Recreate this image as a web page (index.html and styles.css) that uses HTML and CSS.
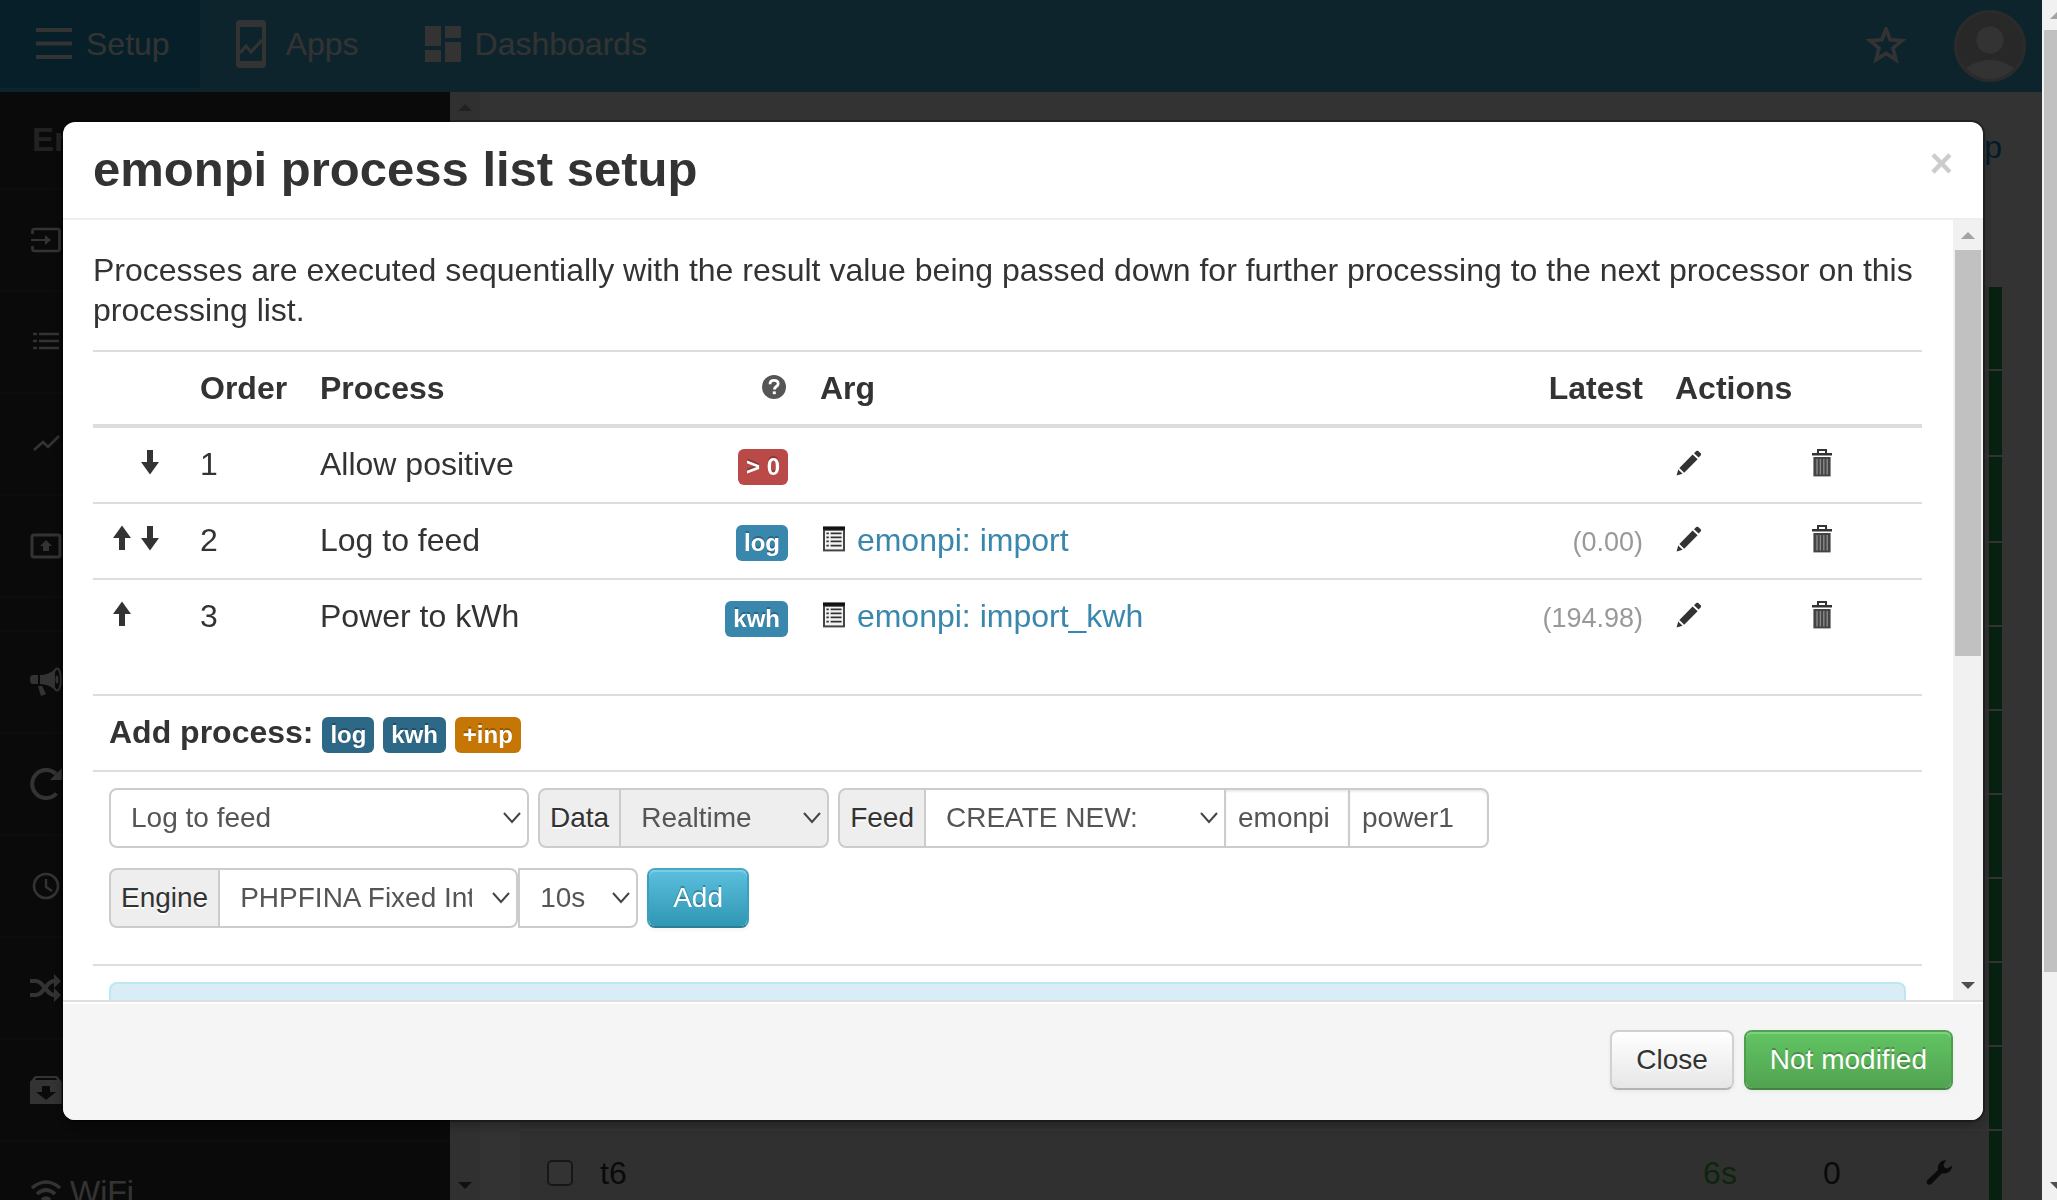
FILE: index.html
```html
<!DOCTYPE html>
<html lang="en">
<head>
<meta charset="utf-8">
<title>emonpi process list setup</title>
<link rel="stylesheet" href="styles.css">
</head>
<body>
<svg class="defs" aria-hidden="true">
  <symbol id="i-up" viewBox="0 0 14 14"><path d="M6.500.8 11 7H8v6H5V7H2z"/></symbol>
  <symbol id="i-down" viewBox="0 0 14 14"><path d="M6.500 13.200 2 7h3V1h3v6h3z"/></symbol>
  <symbol id="i-pencil" viewBox="0 0 14 14"><path d="M.8 13.200l.8-3 2.200 2.200zM2.200 9.500 8.800 2.800l2.500 2.300-6.700 6.800zM9.500 2.100l1-1c.5-.4 1-.3 1.300 0l1 1c.4.4.3.8 0 1.200l-1 1z"/></symbol>
  <symbol id="i-trash" viewBox="0 0 14 14"><path d="M4.500 0h5v2H12v1.300H2V2h2.500zm1 1v1h3V1z" fill-rule="evenodd"/><path d="M2.700 4h8.600v9.700H2.700z" fill="#444"/><path d="M4.500 5v7.700M6.200 5v7.700M7.900 5v7.700M9.600 5v7.700" stroke="#8a8a8a" stroke-width=".7"/></symbol>
  <symbol id="i-list" viewBox="0 0 14 14"><path d="M1.500.8h11V13.200h-11z" fill="#444"/><path d="M1.500.8h11v1.600h-11z" fill="#111"/><path d="M2.500 2.900h9v9.300h-9z" fill="#f4f4f4"/><path d="M3.200 4.200h1.200M5.300 4.200h5.500M3.200 6.200h1.200M5.300 6.200h5.500M3.200 8.200h1.200M5.300 8.200h5.500M3.200 10.300h1.200M5.300 10.300h5.500" stroke="#333" stroke-width=".9"/></symbol>
  <symbol id="i-help" viewBox="0 0 14 14"><circle cx="7" cy="7" r="6" fill="#555"/><path d="M5 5.600C5 4.300 5.800 3.700 7 3.700s2.100.6 2.100 1.700C9.100 6.800 7.200 6.700 7.200 8.200" fill="none" stroke="#fff" stroke-width="1.400"/><path d="M6.400 9.200h1.500v1.400H6.400z" fill="#fff"/></symbol>
  <symbol id="i-wrench" viewBox="0 0 14 14"><path d="M1 11.200 6.500 6C6 3.600 7.500 1 10.600 1.100L9.200 3.200l.5 1.600 1.700.4L13.500 3.700C13.600 6.700 11 8.100 8.500 7.600L3.200 13c-1.200 1-3-.5-2.200-1.800z"/></symbol>
</svg>

<div class="viewport">
  <div class="page">
    <header class="topbar">
      <nav class="topnav">
        <a class="topnav-item active" href="#"><svg viewBox="0 0 36 48"><path d="M0 10h36M0 23.500h36M0 37h36" stroke="currentColor" stroke-width="4"/></svg>Setup</a>
        <a class="topnav-item" href="#"><svg viewBox="0 0 36 48"><path d="M4 0h22a4 4 0 0 1 4 4v40a4 4 0 0 1-4 4H4a4 4 0 0 1-4-4V4a4 4 0 0 1 4-4zM4 7v34h22V7z" fill="currentColor" fill-rule="evenodd"/><path d="M4 33l6-7 5 6 11-12" fill="none" stroke="currentColor" stroke-width="3"/></svg>Apps</a>
        <a class="topnav-item" href="#"><svg viewBox="0 0 36 48"><path d="M0 6h16v20H0zM20 6h16v12H20zM0 30h16v12H0zM20 22h16v20H20z" fill="currentColor"/></svg>Dashboards</a>
      </nav>
      <div class="topbar-right">
        <svg class="star" viewBox="0 2 40 38"><path d="M20 4l4.200 10.800 11.800.8-9 7.600 2.900 11.600L20 28.500l-9.900 6.300L13 23.200l-9-7.600 11.800-.8z" fill="none" stroke="currentColor" stroke-width="3.600"/></svg>
        <svg class="avatar" viewBox="0 0 72 72"><circle cx="36" cy="36" r="34.500" fill="#c8c8c8" stroke="#d4d4d4" stroke-width="3"/><circle cx="36" cy="30" r="13.500" fill="#fff"/><path d="M12 58q24-16 48 0-10 11-24 11T12 58z" fill="#fff"/></svg>
      </div>
    </header>
    <div class="columns">
      <aside class="sidebar">
        <h4 class="sidebar-title">Emoncms</h4>
        <a href="#" aria-label="Inputs"><svg viewBox="0 0 32 32"><path d="M2.500 10V7a2 2 0 0 1 2-2h23a2 2 0 0 1 2 2v18a2 2 0 0 1-2 2h-23a2 2 0 0 1-2-2v-3" fill="none" stroke="currentColor" stroke-width="2.600"/><path d="M1 15h14v-4l6 5-6 5v-4H1z" fill="currentColor"/></svg></a>
        <a href="#" aria-label="Feeds"><svg viewBox="0 0 32 32"><path d="M3 8h4M3 15h4M3 22h4M9 8h20M9 15h20M9 22h20" stroke="currentColor" stroke-width="2.600"/></svg></a>
        <a href="#" aria-label="Graph"><svg viewBox="0 0 32 32"><path d="M4 22l9-8 5 5L29 8" fill="none" stroke="currentColor" stroke-width="2.600"/></svg></a>
        <a href="#" aria-label="Publish"><svg viewBox="0 0 32 32"><rect x="2" y="5" width="28" height="22" rx="2" fill="none" stroke="currentColor" stroke-width="3"/><path d="M16 10l6 6h-3v5h-6v-5h-3z" fill="currentColor"/></svg></a>
        <div class="sidebar-gap"></div>
        <a href="#" aria-label="Events"><svg viewBox="0 3 32 32"><path d="M3 12h5v9H3q-3 0-3-4.500T3 12zM10 12q9 0 15-6v21q-6-6-15-6zM8 23h4l4 8-5 2z" fill="currentColor"/><ellipse cx="27" cy="16.500" rx="4" ry="11" fill="none" stroke="currentColor" stroke-width="2"/><ellipse cx="27" cy="16.500" rx="1.500" ry="4" fill="currentColor"/></svg></a>
        <a href="#" aria-label="Update"><svg viewBox="0 0 32 32"><path d="M26.500 25.500A14 14 0 1 1 26 6" fill="none" stroke="currentColor" stroke-width="4"/><path d="M32 0v12H20z" fill="currentColor"/></svg></a>
        <a href="#" aria-label="Schedule"><svg viewBox="0 0 32 32"><circle cx="16" cy="16" r="12" fill="none" stroke="currentColor" stroke-width="2.600"/><path d="M16 9v8l6 4" fill="none" stroke="currentColor" stroke-width="2.400"/></svg></a>
        <a href="#" aria-label="Sync"><svg viewBox="0 0 32 32"><path d="M0 9h6c8 0 10 14 18 14h2M0 23h6c8 0 10-14 18-14h2" fill="none" stroke="currentColor" stroke-width="4"/><path d="M24 2l7 7-7 7zM24 16l7 7-7 7z" fill="currentColor"/></svg></a>
        <a href="#" aria-label="Backup"><svg viewBox="0 0 32 32"><path d="M5 2h22l5 6v22H0V8zM6.500 4 5 6h22l-1.500-2zM12 12v6H6l10 8 10-8h-6v-6z" fill="currentColor" fill-rule="evenodd"/></svg></a>
        <a href="#"><svg viewBox="0 0 32 32"><path d="M2 12q14-12 28 0M7 18q9-8 18 0M12 24q4-4 8 0" fill="none" stroke="currentColor" stroke-width="3.600"/></svg>WiFi</a>
      </aside>
      <div class="scrollbar">
        <div class="arrow arrow-up muted"></div><div class="thumb thumb-side"></div><div class="arrow arrow-down"></div>
      </div>
      <main class="content">
        <a class="help-link" href="#">Help</a>
        <table class="inputs">
          <colgroup><col class="in-check"><col><col class="in-time"><col class="in-value"><col class="in-tool"><col class="in-bar"></colgroup>
          <tbody>
            <tr><td colspan="5"></td><td class="fresh"></td></tr>
            <tr class="tall"><td colspan="5"></td><td class="fresh"></td></tr>
            <tr class="tall"><td colspan="5"></td><td class="fresh"></td></tr>
            <tr><td colspan="5"></td><td class="fresh"></td></tr>
            <tr><td colspan="5"></td><td class="fresh"></td></tr>
            <tr><td colspan="5"></td><td class="fresh"></td></tr>
            <tr><td colspan="5"></td><td class="fresh"></td></tr>
            <tr><td colspan="5"></td><td class="fresh"></td></tr>
            <tr><td colspan="5"></td><td class="fresh"></td></tr>
            <tr><td colspan="5"></td><td class="fresh"></td></tr>
            <tr><td class="check"><input type="checkbox" aria-label="t6"></td><td>t6</td><td class="time">6s</td><td class="value">0</td><td class="tool"><svg class="icon"><use href="#i-wrench"/></svg></td><td class="fresh"></td></tr>
          </tbody>
        </table>
      </main>
    </div>
  </div>
  <div class="scrollbar scrollbar-page">
    <div class="arrow arrow-up muted"></div><div class="thumb thumb-page"></div><div class="arrow arrow-down"></div>
  </div>
</div>

<div class="backdrop"></div>

<section class="modal" role="dialog" aria-labelledby="modal-title">
  <header class="modal-header">
    <h3 id="modal-title">emonpi process list setup</h3>
    <button class="close" type="button">×</button>
  </header>
  <div class="modal-middle">
    <div class="modal-body">
      <p>Processes are executed sequentially with the result value being passed down for further processing to the next processor on this processing list.</p>
      <table class="processes">
        <colgroup><col class="c-move"><col class="c-order"><col class="c-process"><col class="c-label"><col><col class="c-latest"><col class="c-edit"><col class="c-delete"></colgroup>
        <thead>
          <tr><th></th><th>Order</th><th>Process</th><th class="right"><svg class="icon"><use href="#i-help"/></svg></th><th>Arg</th><th class="right">Latest</th><th colspan="2">Actions</th></tr>
        </thead>
        <tbody>
          <tr>
            <td><span class="moves"><i></i><svg class="icon"><use href="#i-down"/></svg></span></td><td>1</td><td>Allow positive</td><td class="right"><span class="label red">&gt; 0</span></td><td></td><td></td>
            <td><svg class="icon"><use href="#i-pencil"/></svg></td><td><svg class="icon"><use href="#i-trash"/></svg></td>
          </tr>
          <tr>
            <td><span class="moves"><svg class="icon"><use href="#i-up"/></svg><svg class="icon"><use href="#i-down"/></svg></span></td><td>2</td><td>Log to feed</td><td class="right"><span class="label blue">log</span></td><td><a class="feed" href="#"><svg class="icon"><use href="#i-list"/></svg> emonpi: import</a></td><td class="right"><small>(0.00)</small></td>
            <td><svg class="icon"><use href="#i-pencil"/></svg></td><td><svg class="icon"><use href="#i-trash"/></svg></td>
          </tr>
          <tr>
            <td><span class="moves"><svg class="icon"><use href="#i-up"/></svg></span></td><td>3</td><td>Power to kWh</td><td class="right"><span class="label blue">kwh</span></td><td><a class="feed" href="#"><svg class="icon"><use href="#i-list"/></svg> emonpi: import_kwh</a></td><td class="right"><small>(194.98)</small></td>
            <td><svg class="icon"><use href="#i-pencil"/></svg></td><td><svg class="icon"><use href="#i-trash"/></svg></td>
          </tr>
        </tbody>
      </table>
      <div class="row add-title"><b>Add process:</b> <span class="label navy">log</span> <span class="label navy">kwh</span> <span class="label orange">+inp</span></div>
      <form class="row controls">
        <div class="line">
          <select class="w-process" aria-label="Process"><option>Log to feed</option></select>
          <div class="group"><label class="addon" for="data">Data</label><select id="data" class="w-data" disabled><option>Realtime</option></select></div>
          <div class="group"><label class="addon" for="feed">Feed</label><select id="feed" class="w-feed"><option>CREATE NEW:</option></select><input class="w-tag" type="text" value="emonpi" aria-label="Tag"><input class="w-name" type="text" value="power1" aria-label="Name"></div>
        </div>
        <div class="line">
          <div class="group engine"><label class="addon" for="engine">Engine</label><select id="engine" class="w-engine"><option>PHPFINA Fixed Interval TimeSeries</option></select><select class="w-interval" aria-label="Interval"><option>10s</option></select></div>
          <button class="btn info" type="button">Add</button>
        </div>
      </form>
      <div class="row"><div class="alert"></div></div>
    </div>
    <div class="scrollbar">
      <div class="arrow arrow-up muted"></div><div class="thumb thumb-modal"></div><div class="arrow arrow-down"></div>
    </div>
  </div>
  <footer class="modal-footer">
    <button class="btn" type="button">Close</button>
    <button class="btn success" type="button">Not modified</button>
  </footer>
</section>
</body>
</html>
```
FILE: styles.css
```css
* { box-sizing: border-box; }
body {
  margin: 0;
  height: 100vh;
  overflow: hidden;
  background: #fff;
  color: #333;
  font: 32px/40px "Liberation Sans", Arial, sans-serif;
}
a { color: #08c; text-decoration: none; }
svg { display: block; }
.defs { position: absolute; width: 0; height: 0; }
.icon { display: inline-block; width: 28px; height: 28px; fill: #333; vertical-align: -2px; }

/* page behind the dialog */
.viewport { display: flex; height: 100vh; overflow: hidden; }
.page { flex: 1; min-width: 0; display: flex; flex-direction: column; }
.topbar { display: flex; justify-content: space-between; flex: none; height: 92px; background: #48b4dc; }
.topnav { display: flex; height: 88px; }
.topnav-item { display: flex; align-items: center; gap: 14px; padding: 0 30px 0 36px; color: #fff; }
.topnav-item svg { width: 36px; height: 48px; }
.topnav-item.active { background: #1e9bcd; }
.topbar-right { display: flex; align-items: center; gap: 48px; padding-right: 16px; color: #fff; }
.star { width: 40px; height: 38px; }
.avatar { width: 72px; height: 72px; }
.columns { display: flex; flex: 1; min-height: 0; }
.sidebar { flex: none; width: 450px; background: #333; overflow: hidden; }
.sidebar-title { margin: 0; padding: 28px 32px; height: 96px; font-size: 33px; color: #aaa; }
.sidebar a { display: flex; align-items: center; gap: 8px; height: 102px; padding: 0 30px; border-top: 2px solid #414141; color: #fff; }
.sidebar a svg { width: 32px; height: 32px; overflow: visible; }
.sidebar-gap { height: 34px; border-top: 2px solid #414141; }
.content { flex: 1; min-width: 0; padding: 35px 40px 0; overflow: hidden; }
.help-link { display: block; text-align: right; margin-bottom: 120px; }
.inputs { width: 100%; table-layout: fixed; border-collapse: separate; border-spacing: 0; background: #f0f0f0; }
.inputs td { height: 84px; padding: 2px 0 0; border-bottom: 2px solid #fff; }
.inputs .tall td { height: 86px; }
.inputs .fresh { background: #28a04b; }
.inputs .check { padding-left: 27px; }
.inputs input { display: block; appearance: none; width: 26px; height: 26px; margin: 0; border: 2px solid #767676; border-radius: 5px; background: #fff; }
.inputs .time { text-align: center; color: #4b4; }
.inputs .value, .inputs .tool { text-align: center; }
.in-check { width: 80px; }
.in-time { width: 110px; }
.in-value { width: 114px; }
.in-tool { width: 100px; }
.in-bar { width: 13px; }
.backdrop { position: fixed; inset: 0 15px 0 0; background: rgba(0, 0, 0, .8); }

/* scrollbars */
.scrollbar { display: flex; flex-direction: column; flex: none; width: 30px; background: #f1f1f1; }
.arrow { flex: none; height: 30px; display: flex; align-items: center; justify-content: center; }
.arrow::before { content: ""; border: 7px solid transparent; border-top-width: 0; border-bottom: 7px solid #505050; }
.arrow-down::before { border-width: 7px 7px 0; border-top-color: #505050; border-bottom: 0; }
.arrow.muted::before { border-bottom-color: #a3a3a3; }
.thumb { margin: 0 2px; background: #c1c1c1; }
.arrow-down { margin-top: auto; }
.thumb-side { height: 80%; }
.thumb-page { height: 942px; max-height: 90%; }
.thumb-modal { height: 406px; max-height: 80%; }
.scrollbar-page { width: 15px; overflow: hidden; }
.scrollbar-page > div { width: 30px; }

/* dialog */
.modal {
  position: fixed;
  inset: 122px 74px 80px 63px;
  display: flex;
  flex-direction: column;
  border-radius: 12px;
  overflow: hidden;
  background: #fff;
  box-shadow: 0 0 0 2px rgba(0, 0, 0, .3), 0 6px 14px rgba(0, 0, 0, .3);
}
.modal-header { display: flex; justify-content: space-between; align-items: flex-start; flex: none; padding: 17px 30px 19px; border-bottom: 2px solid #eee; }
.modal-header h3 { margin: 0; font-size: 49px; line-height: 60px; }
.close { padding: 0; border: 0; background: none; color: #ccc; font: bold 40px/48px "Liberation Sans", Arial, sans-serif; }
.modal-middle { display: flex; flex: 1; min-height: 0; }
.modal-body { flex: 1; min-width: 0; padding: 30px 31px 0 30px; overflow: hidden; }
.modal-body p { margin: 0 0 20px; }
.processes { width: 100%; table-layout: fixed; border-collapse: separate; border-spacing: 0; margin-bottom: 40px; }
.processes th, .processes td { height: 76px; padding: 16px; border-top: 2px solid #ddd; text-align: left; vertical-align: top; white-space: nowrap; line-height: 40px; }
.processes th { height: 74px; }
.processes tbody tr:first-child td { border-top-width: 4px; height: 78px; }
.processes .right { text-align: right; }
.c-move { width: 91px; }
.c-order { width: 120px; }
.c-process { width: 300px; }
.c-label { width: 200px; }
.c-latest { width: 200px; }
.c-edit { width: 133px; }
.c-delete { width: 130px; }
.moves { display: flex; height: 36px; align-items: center; }
.moves .icon, .moves i { flex: none; width: 28px; }
.feed { color: #3a87ad; }
small { font-size: 27px; color: #999; }
.label { display: inline-block; padding: 4px 8px; border-radius: 6px; color: #fff; font-weight: bold; font-size: 24px; line-height: 28px; text-shadow: 0 -2px 0 rgba(0, 0, 0, .25); vertical-align: baseline; }
.red { background: #b94a48; }
.blue { background: #3a87ad; }
.navy { background: #2d6987; }
.orange { background: #c67605; }
.row { border-top: 2px solid #ddd; padding: 16px; }
.add-title { height: 76px; }
.controls { height: 194px; }
.line { display: flex; gap: 9px; margin-bottom: 20px; }
.group { display: flex; }
.field, select, input[type="text"], .addon, .btn { height: 60px; margin: 0; border: 2px solid #ccc; font: 28px/40px "Liberation Sans", Arial, sans-serif; }
select, input[type="text"] { border-radius: 8px; background-color: #fff; color: #555; opacity: 1; }
select {
  appearance: none;
  padding: 0 44px 0 20px;
  background-image: url("data:image/svg+xml,%3Csvg xmlns='http://www.w3.org/2000/svg' width='18' height='12' viewBox='0 0 18 12'%3E%3Cpath d='M1 1l8 9 8-9' fill='none' stroke='%23444' stroke-width='2'/%3E%3C/svg%3E");
  background-repeat: no-repeat;
  background-position: right 6px center;
}
select:disabled { background-color: #eee; color: #555; }
input[type="text"] { padding: 0 12px; box-shadow: inset 0 2px 2px rgba(0, 0, 0, .075); }
.addon { padding: 8px 10px; background: #eee; text-shadow: 0 2px 0 #fff; }
.group > *, .group > input[type="text"] { border-radius: 0; }
.group > * + *, .group > * + input[type="text"] { margin-left: -2px; }
.group > :first-child { border-radius: 8px 0 0 8px; }
.group > :last-child, .group > input[type="text"]:last-child { border-radius: 0 8px 8px 0; }
.w-process { width: 420px; }
.w-data { width: 210px; }
.w-feed { width: 302px; }
.w-tag { width: 126px; }
.w-name { width: 141px; }
.engine .w-engine { width: 300px; border-radius: 0 8px 8px 0; }
.engine .w-interval { width: 120px; margin-left: 0; }
.btn {
  padding: 8px 24px;
  border-color: #d0d0d0 #d0d0d0 #b3b3b3;
  border-radius: 8px;
  background: linear-gradient(#fff, #e6e6e6) padding-box;
  color: #333;
  text-shadow: 0 2px 2px rgba(255, 255, 255, .75);
  box-shadow: inset 0 2px 0 rgba(255, 255, 255, .2), 0 2px 4px rgba(0, 0, 0, .05);
}
.btn.info { border-color: #45a9c6 #3d9fbd #2b7e96; background: linear-gradient(#5bc0de, #2f96b4) padding-box; }
.btn.success { border-color: #51a351 #4d9d4d #428442; background: linear-gradient(#62c462, #51a351) padding-box; }
.btn.info, .btn.success { color: #fff; text-shadow: 0 -2px 0 rgba(0, 0, 0, .25); }
.alert { height: 120px; border: 2px solid #bce8f1; border-radius: 8px; background: #d9edf7; }
.modal-footer { display: flex; justify-content: flex-end; gap: 10px; flex: none; padding: 28px 30px 30px; border-top: 2px solid #ddd; background: #f5f5f5; box-shadow: inset 0 2px 0 #fff; }
```
